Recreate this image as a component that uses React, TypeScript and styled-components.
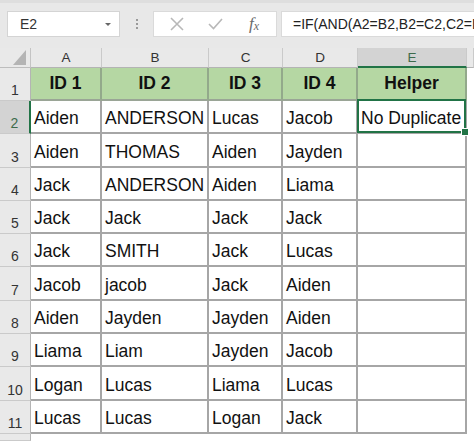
import styled, { createGlobalStyle } from "styled-components"

const GlobalStyle = createGlobalStyle`
  html, body {
    margin: 0;
    padding: 0;
    background: #ffffff;
    overflow: hidden;
  }
  body {
    font-family: "Liberation Sans", Arial, sans-serif;
  }
`

const COLUMNS = ["A", "B", "C", "D", "E"]
const TITLES = ["ID 1", "ID 2", "ID 3", "ID 4", "Helper"]
const ROWS = [
  ["Aiden", "ANDERSON", "Lucas", "Jacob", "No Duplicate"],
  ["Aiden", "THOMAS", "Aiden", "Jayden", ""],
  ["Jack", "ANDERSON", "Aiden", "Liama", ""],
  ["Jack", "Jack", "Jack", "Jack", ""],
  ["Jack", "SMITH", "Jack", "Lucas", ""],
  ["Jacob", "jacob", "Jack", "Aiden", ""],
  ["Aiden", "Jayden", "Jayden", "Aiden", ""],
  ["Liama", "Liam", "Jayden", "Jacob", ""],
  ["Logan", "Lucas", "Liama", "Lucas", ""],
  ["Lucas", "Lucas", "Logan", "Jack", ""],
]

const GREEN = "#217346"

/* formula bar */
const FormulaBar = styled.div`
  height: 48px;
  box-sizing: border-box;
  padding: 8px 0 0 7px;
  display: flex;
  align-items: flex-start;
  background: #e8e8e8;
  border-top: 3px solid #dedede;
`

const NameBox = styled.div`
  width: 113px;
  height: 26px;
  box-sizing: border-box;
  background: #ffffff;
  border: 1px solid #d4d4d4;
  display: flex;
  align-items: center;
  justify-content: space-between;
  padding: 0 8px 0 12px;
  font-size: 14px;
  color: #333333;
`

const Caret = styled.span`
  width: 0;
  height: 0;
  border-left: 3px solid transparent;
  border-right: 3px solid transparent;
  border-top: 3px solid #666666;
`

const Grip = styled.div`
  width: 33px;
  height: 26px;
  display: flex;
  flex-direction: column;
  align-items: center;
  justify-content: center;
  gap: 2px;

  span {
    width: 2px;
    height: 2px;
    background: #9a9a9a;
  }
`

const ButtonBox = styled.div`
  width: 124px;
  height: 26px;
  box-sizing: border-box;
  background: #ffffff;
  border: 1px solid #dadada;
  display: flex;
  align-items: center;
  padding-left: 16px;
  gap: 24px;
`

const Fx = styled.span`
  font-family: "Liberation Serif", "Times New Roman", serif;
  font-style: italic;
  font-size: 17px;
  color: #6a6a6a;
  margin-left: 2px;

  sub {
    font-size: 12px;
    vertical-align: -1px;
  }
`

const FormulaInput = styled.div`
  flex: 1;
  height: 26px;
  margin-left: 4px;
  box-sizing: border-box;
  background: #ffffff;
  border: 1px solid #dadada;
  border-right: none;
  display: flex;
  align-items: center;
  padding-left: 11px;
  font-size: 14px;
  color: #222222;
  white-space: nowrap;
  overflow: hidden;
`

/* sheet grid */
const Sheet = styled.div`
  display: grid;
  grid-template-columns: 31px 71px 107px 74px 75px 109px 1fr;
  grid-template-rows: 20px 33px repeat(10, 33.3px) 1fr;
  height: 393px;
  background: #ffffff;
`

const Corner = styled.div`
  background: #e9e9e9;
  border-right: 1px solid #c4c4c4;
  border-bottom: 1px solid #bdbdbd;
  display: flex;
  align-items: flex-end;
  justify-content: flex-end;
  padding: 0 4px 2px 0;
`

const ColHeader = styled.div<{ $selected?: boolean }>`
  box-sizing: border-box;
  background: ${({ $selected }) => ($selected ? "#d3d3d3" : "#e9e9e9")};
  border-right: 1px solid #cacaca;
  border-bottom: ${({ $selected }) => ($selected ? `2px solid ${GREEN}` : "1px solid #b4b4b4")};
  display: flex;
  align-items: center;
  justify-content: center;
  font-size: 13.5px;
  color: ${({ $selected }) => ($selected ? "#3d6b4c" : "#333333")};
`

const RowHeader = styled.div<{ $selected?: boolean }>`
  box-sizing: border-box;
  background: ${({ $selected }) => ($selected ? "#d3d3d3" : "#e9e9e9")};
  border-bottom: 1px solid #cacaca;
  border-right: ${({ $selected }) => ($selected ? `2px solid ${GREEN}` : "1px solid #b4b4b4")};
  display: flex;
  align-items: flex-end;
  justify-content: center;
  padding-bottom: 2px;
  font-size: 14px;
  color: ${({ $selected }) => ($selected ? "#3d6b4c" : "#333333")};
`

const TitleCell = styled.div`
  box-sizing: border-box;
  background: #b5d7a3;
  border-right: 2px solid #93a98b;
  border-bottom: 2px solid #9aa596;
  display: flex;
  align-items: center;
  justify-content: center;
  font-size: 17.5px;
  font-weight: 700;
  color: #111111;
`

const DataCell = styled.div<{ $active?: boolean }>`
  position: relative;
  box-sizing: border-box;
  border-right: 2px solid #a6a6a6;
  border-bottom: 2px solid #a6a6a6;
  display: flex;
  align-items: flex-end;
  padding: 0 0 3px 3px;
  font-size: 17.5px;
  color: #111111;
  white-space: nowrap;

  ${({ $active }) =>
    $active &&
    `
    &::after {
      content: "";
      position: absolute;
      inset: -2px -1px -1px -1px;
      border: 2px solid ${GREEN};
      pointer-events: none;
    }
    &::before {
      content: "";
      position: absolute;
      right: -4px;
      bottom: -4px;
      width: 6px;
      height: 6px;
      background: ${GREEN};
      border: 1px solid #ffffff;
      z-index: 2;
    }
  `}
`

const Blank = styled.div`
  background: #ffffff;
`

function CloseIcon() {
  return (
    <svg width="14" height="14" viewBox="0 0 14 14">
      <path d="M1 1 L13 13 M13 1 L1 13" stroke="#b8b8b8" strokeWidth="1.6" fill="none" />
    </svg>
  )
}

function CheckIcon() {
  return (
    <svg width="15" height="12" viewBox="0 0 15 12">
      <path d="M1 6 L5.5 10.5 L14 1" stroke="#b8b8b8" strokeWidth="1.6" fill="none" />
    </svg>
  )
}

function SelectAll() {
  return (
    <svg width="13" height="15" viewBox="0 0 13 15">
      <polygon points="13,0 13,15 0,15" fill="#b4b4b4" />
    </svg>
  )
}

export default function App() {
  return (
    <>
      <GlobalStyle />
      <FormulaBar>
        <NameBox>
          E2
          <Caret />
        </NameBox>
        <Grip>
          <span />
          <span />
          <span />
        </Grip>
        <ButtonBox>
          <CloseIcon />
          <CheckIcon />
          <Fx>
            f<sub>x</sub>
          </Fx>
        </ButtonBox>
        <FormulaInput>=IF(AND(A2=B2,B2=C2,C2=D</FormulaInput>
      </FormulaBar>

      <Sheet>
        {/* column letters */}
        <Corner>
          <SelectAll />
        </Corner>
        {COLUMNS.map((c) => (
          <ColHeader key={c} $selected={c === "E"}>
            {c}
          </ColHeader>
        ))}
        <ColHeader />

        {/* row 1: titles */}
        <RowHeader>1</RowHeader>
        {TITLES.map((t) => (
          <TitleCell key={t}>{t}</TitleCell>
        ))}
        <Blank />

        {/* rows 2..11 */}
        {ROWS.map((row, r) => [
          <RowHeader key={`h${r}`} $selected={r === 0}>
            {r + 2}
          </RowHeader>,
          ...row.map((value, c) => (
            <DataCell key={`${r}-${c}`} $active={r === 0 && c === 4}>
              {value}
            </DataCell>
          )),
          <Blank key={`b${r}`} />,
        ])}

        <RowHeader />
        {COLUMNS.map((c) => (
          <Blank key={`f${c}`} />
        ))}
        <Blank />
      </Sheet>
    </>
  )
}
